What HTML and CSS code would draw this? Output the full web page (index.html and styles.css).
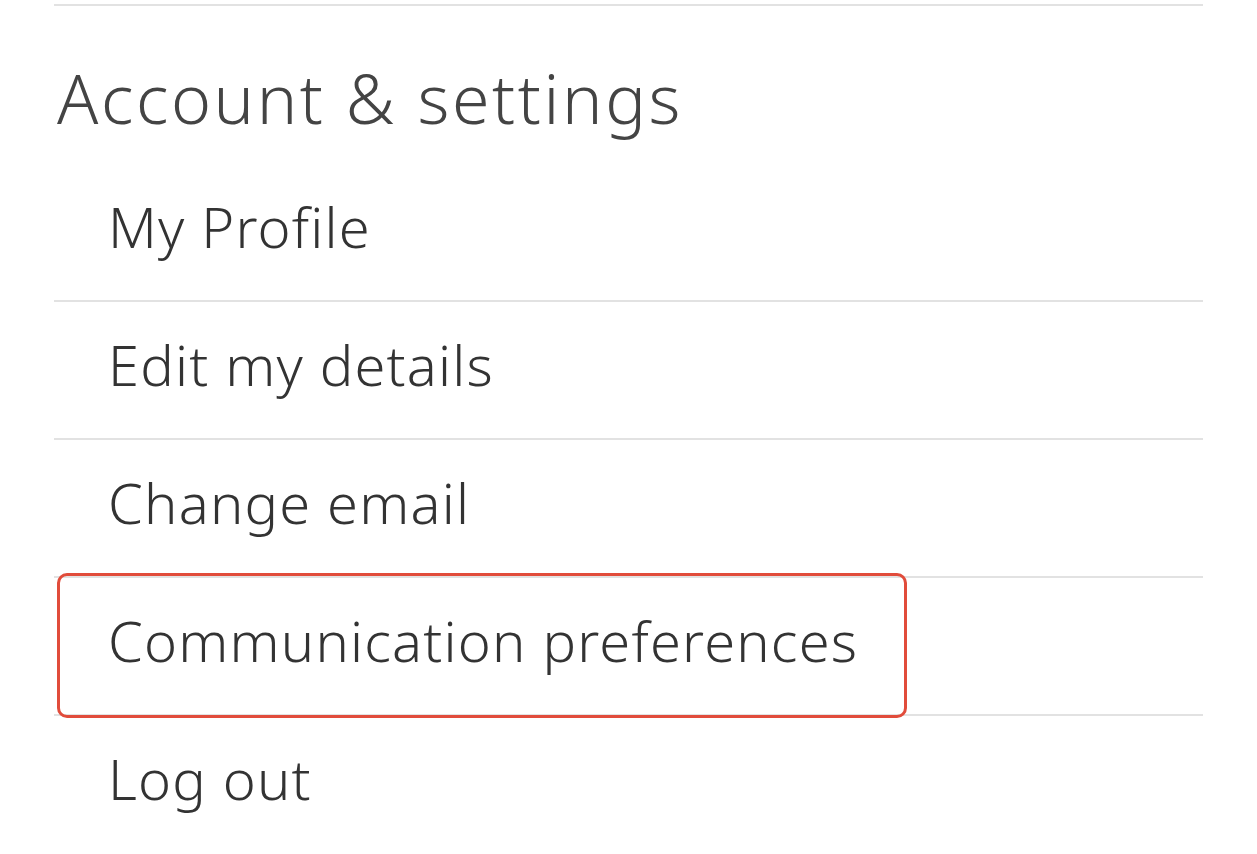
FILE: index.html
```html
<!DOCTYPE html>
<html lang="en">
<head>
<meta charset="utf-8">
<title>Account &amp; settings</title>
<link rel="stylesheet" href="styles.css">
</head>
<body>
<section class="panel">
  <h2 class="panel-title">Account &amp; settings</h2>
  <ul class="menu">
    <li class="menu-item"><a href="#">My Profile</a></li>
    <li class="menu-item"><a href="#">Edit my details</a></li>
    <li class="menu-item"><a href="#">Change email</a></li>
    <li class="menu-item highlighted"><a href="#">Communication preferences</a><span class="highlight-box"></span></li>
    <li class="menu-item"><a href="#">Log out</a></li>
  </ul>
</section>
</body>
</html>
```

FILE: styles.css
```css
html, body {
  margin: 0;
  padding: 0;
  background: #ffffff;
}

body {
  font-family: "Noto Sans", "Liberation Sans", sans-serif;
  font-weight: 300;
  color: #333333;
}

.panel {
  margin: 4px 0 0 54px;
  width: 1149px;
  border-top: 2px solid #e2e2e2;
}

.panel-title {
  margin: 0;
  height: 158px;
  box-sizing: border-box;
  padding: 47px 0 0 3px;
  font-size: 68px;
  font-weight: 300;
  letter-spacing: 2.6px;
  line-height: 90px;
  color: #444444;
}

.menu {
  list-style: none;
  margin: 0;
  padding: 0;
}

.menu-item {
  position: relative;
  height: 136px;
  box-sizing: content-box;
  border-bottom: 2px solid #e2e2e2;
}

.menu-item:last-child {
  border-bottom: none;
}

.menu-item a {
  display: block;
  padding: 24px 0 0 54px;
  font-size: 56px;
  letter-spacing: 1.2px;
  line-height: 76px;
  color: #333333;
  text-decoration: none;
}

.highlight-box {
  position: absolute;
  left: 3px;
  top: -5px;
  width: 844px;
  height: 139px;
  border: 3.5px solid #e14c3b;
  border-radius: 10px;
  pointer-events: none;
}
```
